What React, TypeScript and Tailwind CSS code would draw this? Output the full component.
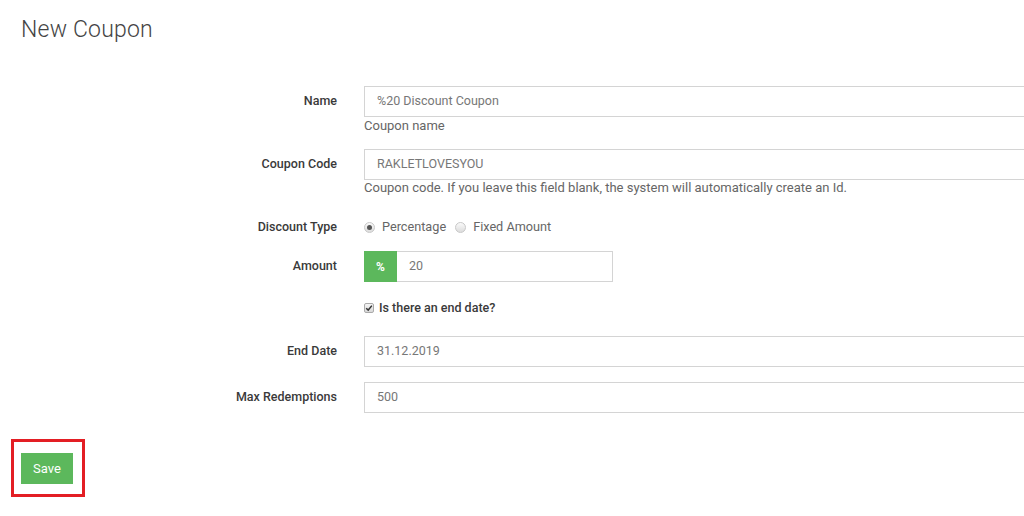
import React from 'react';

const font = { fontFamily: 'Roboto, "Liberation Sans", Arial, sans-serif' };

function Label({ children }: { children: React.ReactNode }) {
  return (
    <div className="w-[337px] shrink-0 text-right text-[12.5px] font-medium text-[#3a3a3a]">
      {children}
    </div>
  );
}

function TextInput({ value }: { value: string }) {
  return (
    <div className="h-[31px] flex-1 flex items-center border border-r-0 border-[#d4d4d4] bg-white pl-[12px] text-[12.5px] text-[#777]">
      {value}
    </div>
  );
}

function Radio({ checked }: { checked?: boolean }) {
  return (
    <span className="w-[11px] h-[11px] rounded-full border border-[#c8c8c8] bg-gradient-to-b from-[#fafafa] to-[#dcdcdc] flex items-center justify-center">
      {checked && <span className="w-[5px] h-[5px] rounded-full bg-[#555]" />}
    </span>
  );
}

export default function App() {
  return (
    <div className="w-[1024px] h-[516px] bg-white overflow-hidden relative" style={font}>
      <h1 className="pl-[21px] pt-[15px] text-[23px] font-light text-[#444] leading-[30px] tracking-[0.2px]">
        New Coupon
      </h1>

      <div className="mt-[41px]">
        {/* Name */}
        <div className="flex items-center">
          <Label>Name</Label>
          <div className="ml-[27px] flex-1 flex">
            <TextInput value="%20 Discount Coupon" />
          </div>
        </div>
        <div className="ml-[364px] mt-[1px] text-[13px] text-[#666] leading-[16px]">Coupon name</div>

        {/* Coupon Code */}
        <div className="flex items-center mt-[15px]">
          <Label>Coupon Code</Label>
          <div className="ml-[27px] flex-1 flex">
            <TextInput value="RAKLETLOVESYOU" />
          </div>
        </div>
        <div className="ml-[364px] mt-[0px] text-[13px] text-[#666] leading-[16px]">
          Coupon code. If you leave this field blank, the system will automatically create an Id.
        </div>

        {/* Discount Type */}
        <div className="flex items-center mt-[23px] h-[16px]">
          <Label>Discount Type</Label>
          <div className="ml-[27px] flex items-center text-[12.7px] text-[#666]">
            <Radio checked />
            <span className="ml-[7px]">Percentage</span>
            <span className="ml-[9px]"><Radio /></span>
            <span className="ml-[7px]">Fixed Amount</span>
          </div>
        </div>

        {/* Amount */}
        <div className="flex items-center mt-[16px]">
          <Label>Amount</Label>
          <div className="ml-[27px] flex h-[31px] w-[249px]">
            <div className="w-[33px] bg-[#5cb85c] text-white text-[12px] font-bold flex items-center justify-center">
              %
            </div>
            <div className="flex-1 border border-l-0 border-[#d4d4d4] flex items-center pl-[12px] text-[12.5px] text-[#777]">
              20
            </div>
          </div>
        </div>

        {/* End date checkbox */}
        <div className="ml-[364px] mt-[18px] flex items-center h-[16px]">
          <span className="w-[10px] h-[10px] rounded-[2px] border border-[#aaa] bg-gradient-to-b from-[#f5f5f5] to-[#d8d8d8] flex items-center justify-center">
            <svg viewBox="0 0 10 10" className="w-[8px] h-[8px]">
              <path d="M1.5 5.2 L4 7.6 L8.6 2" fill="none" stroke="#333" strokeWidth="1.8" />
            </svg>
          </span>
          <span className="ml-[5px] text-[12.5px] font-medium text-[#3a3a3a]">Is there an end date?</span>
        </div>

        {/* End Date */}
        <div className="flex items-center mt-[20px]">
          <Label>End Date</Label>
          <div className="ml-[27px] flex-1 flex">
            <TextInput value="31.12.2019" />
          </div>
        </div>

        {/* Max Redemptions */}
        <div className="flex items-center mt-[15px]">
          <Label>Max Redemptions</Label>
          <div className="ml-[27px] flex-1 flex">
            <TextInput value="500" />
          </div>
        </div>
      </div>

      {/* Save */}
      <div className="ml-[11px] mt-[26px] w-[74px] h-[58px] border-[3px] border-[#e31e24] flex items-start pt-[11px] pl-[7px]">
        <button className="w-[52px] h-[31px] bg-[#5cb85c] text-white text-[13px] flex items-center justify-center">
          Save
        </button>
      </div>
    </div>
  );
}
